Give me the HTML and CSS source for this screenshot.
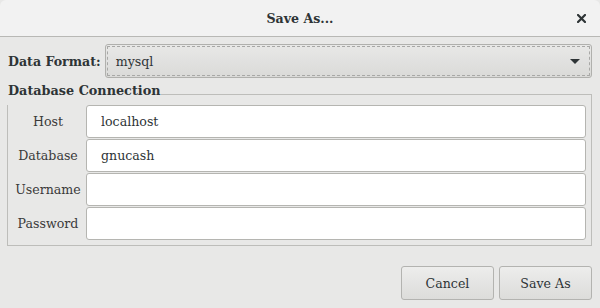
FILE: index.html
```html
<!DOCTYPE html>
<html lang="en">
<head>
  <meta charset="UTF-8" />
  <title>Save As...</title>
  <link rel="stylesheet" href="styles.css">
</head>
<body>
  <div class="dialog">
    <header class="titlebar">
      <span></span>
      <h1>Save As...</h1>
      <button class="close" aria-label="Close">
        <svg width="9" height="9" viewBox="0 0 9 9"><path d="M1 1L8 8M8 1L1 8" stroke="#2e3436" stroke-width="2.2" stroke-linecap="square" fill="none"/></svg>
      </button>
    </header>
    <main class="content">
      <div class="format-row">
        <label for="format">Data Format:</label>
        <div class="combo" id="format">
          <span>mysql</span>
          <span class="arrow"></span>
        </div>
      </div>
      <fieldset class="frame">
        <legend>Database Connection</legend>
        <div class="fields">
          <label for="host">Host</label>
          <input id="host" type="text" value="localhost">
          <label for="db">Database</label>
          <input id="db" type="text" value="gnucash">
          <label for="user">Username</label>
          <input id="user" type="text" value="">
          <label for="pass">Password</label>
          <input id="pass" type="password" value="">
        </div>
      </fieldset>
      <div class="actions">
        <button class="btn">Cancel</button>
        <button class="btn">Save As</button>
      </div>
    </main>
  </div>
</body>
</html>
```

FILE: styles.css
```css
* { margin: 0; padding: 0; box-sizing: border-box; }
body {
  font-family: "DejaVu Serif", serif;
  font-size: 12.6px;
  color: #2e3436;
  background: #e8e8e7;
}
.dialog {
  width: 600px;
  height: 308px;
  background: #e8e8e7;
}
.titlebar {
  height: 37px;
  display: grid;
  grid-template-columns: 1fr auto 1fr;
  align-items: center;
  background: #f2f2f2;
  border-bottom: 1px solid #b8b8b5;
  border-radius: 6px 6px 0 0;
}
.titlebar h1 {
  font-size: 12.6px;
  font-weight: bold;
  color: #2e3436;
}
.close {
  justify-self: end;
  display: flex;
  margin-right: 14px;
  border: none;
  background: none;
}
.content {
  padding: 0 8px 0 7px;
}
.format-row {
  display: flex;
  align-items: center;
  gap: 4px;
  margin-top: 7px;
  padding-left: 1px;
}
.format-row label {
  font-weight: bold;
  white-space: nowrap;
}
.combo {
  flex: 1;
  height: 34px;
  display: flex;
  align-items: center;
  justify-content: space-between;
  padding: 0 10px;
  border: 1px solid #b0b0ad;
  border-radius: 3px;
  background: linear-gradient(#e8e8e7, #dadad8);
  outline: 1px dashed #a8a8a6;
  outline-offset: -3px;
  color: #2e3436;
}
.arrow {
  width: 0;
  height: 0;
  border-left: 5px solid transparent;
  border-right: 5px solid transparent;
  border-top: 5px solid #2e3436;
  margin-right: 1px;
}
.frame {
  border: 1px solid #bdbdba;
  margin-top: 5px;
  padding: 0 5px 5px 2px;
}
.frame legend {
  font-weight: bold;
  font-size: 12.8px;
  padding: 0 0 7px 1px;
  margin-left: -3px;
  background: #e8e8e7;
}
.fields {
  display: grid;
  grid-template-columns: 76px 1fr;
  row-gap: 1px;
  padding-top: 0;
  align-items: center;
}
.fields label {
  text-align: center;
  color: #3a3a3a;
}
.fields input {
  height: 33px;
  border: 1px solid #b5b5b1;
  border-radius: 3px;
  background: #fff;
  padding: 0 14px;
  font-family: "DejaVu Serif", serif;
  font-size: 12.6px;
  color: #2e3436;
}
.actions {
  display: flex;
  justify-content: flex-end;
  gap: 5px;
  margin-top: 20px;
}
.btn {
  width: 93px;
  height: 34px;
  border: 1px solid #b3b3b0;
  border-radius: 3px;
  background: linear-gradient(#ededec, #dcdcda);
  font-family: "DejaVu Serif", serif;
  font-size: 12.6px;
  color: #2e3436;
}
```
